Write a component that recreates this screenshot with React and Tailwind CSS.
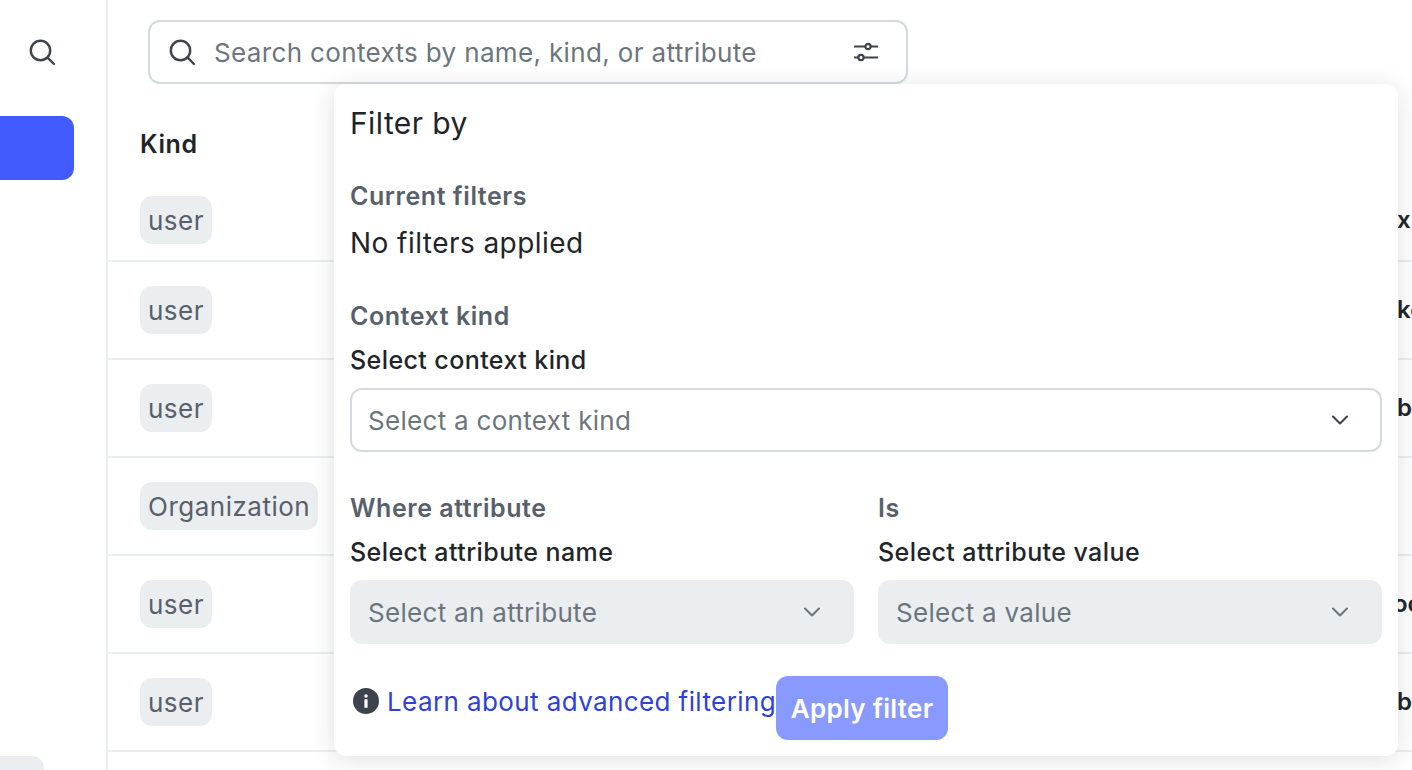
import React from "react";
import { ChevronDown } from "lucide-react";

const rows = [
  { kind: "user", tail: "x", first: true },
  { kind: "user", tail: "ke" },
  { kind: "user", tail: "be" },
  { kind: "Organization", tail: "" },
  { kind: "user", tail: "oc", shifted: true },
  { kind: "user", tail: "be" },
];

const SearchIcon = ({ className }) => (
  <svg viewBox="0 0 28 28" fill="none" stroke="currentColor" strokeWidth="2.4" className={className}>
    <circle cx="12.5" cy="12.5" r="9.7" />
    <path d="M19.6 19.6 L26 26" strokeLinecap="round" />
  </svg>
);

const SlidersIcon = () => (
  <svg viewBox="0 0 24 20" fill="none" stroke="currentColor" className="w-6 h-5 text-[#3d444d]">
    <path d="M0 4.5H11.5M16.5 4.5H24M0 15.5H4.5M9.5 15.5H24" strokeWidth="2.2" />
    <circle cx="14" cy="4.5" r="2.6" strokeWidth="2.2" />
    <circle cx="7" cy="15.5" r="2.6" strokeWidth="2.2" />
  </svg>
);

const InfoIcon = () => (
  <svg viewBox="0 0 26 26" className="w-[26px] h-[26px] shrink-0">
    <circle cx="13" cy="13" r="13" fill="#3d444d" />
    <circle cx="13" cy="8" r="1.8" fill="#fff" />
    <rect x="11.4" y="11.2" width="3.2" height="8.6" rx="0.6" fill="#fff" />
  </svg>
);

const Select = ({ label, disabled, className }) => (
  <div
    className={
      disabled
        ? "h-16 rounded-xl bg-[#ebeef1] flex items-center justify-between pl-[18px] pr-[28px] " + (className || "")
        : "h-16 rounded-xl border-2 border-[#d5dae1] bg-white flex items-center justify-between pl-4 pr-[26px] " + (className || "")
    }
  >
    <span className="text-[26px] tracking-[0.3px] text-[#6c757d]">{label}</span>
    <ChevronDown className={disabled ? "w-7 h-7 text-[#6c757d]" : "w-7 h-7 text-[#3d444d]"} strokeWidth={1.8} />
  </div>
);

const SectionLabel = ({ children }) => (
  <div className="text-[25px] leading-8 tracking-[0.55px] font-semibold text-[#58606b]">{children}</div>
);

const FieldLabel = ({ children }) => (
  <div className="text-[25px] leading-8 tracking-[0.42px] font-medium text-[#212529]">{children}</div>
);

const FilterPopover = () => (
  <div className="absolute left-[334px] top-[84px] w-[1064px] h-[672px] bg-white rounded-xl shadow-[0_4px_24px_rgba(33,37,41,0.14)] p-4 flex flex-col">
    <div className="text-[30px] leading-[46px] tracking-[0.4px] text-[#212529]">Filter by</div>

    <div className="mt-[34px]">
      <SectionLabel>Current filters</SectionLabel>
    </div>
    <div className="text-[28px] leading-[46px] tracking-[0.45px] mt-[8px] text-[#212529]">No filters applied</div>

    <div className="mt-[34px]">
      <SectionLabel>Context kind</SectionLabel>
    </div>
    <div className="mt-3">
      <FieldLabel>Select context kind</FieldLabel>
    </div>
    <Select label="Select a context kind" className="mt-3" />

    <div className="grid grid-cols-2 gap-6 mt-10">
      <div>
        <SectionLabel>Where attribute</SectionLabel>
        <div className="mt-3">
          <FieldLabel>Select attribute name</FieldLabel>
        </div>
        <Select label="Select an attribute" disabled className="mt-3" />
      </div>
      <div>
        <SectionLabel>Is</SectionLabel>
        <div className="mt-3">
          <FieldLabel>Select attribute value</FieldLabel>
        </div>
        <Select label="Select a value" disabled className="mt-3" />
      </div>
    </div>

    <div className="flex items-start mt-8">
      <div className="flex items-center gap-2 pl-[3px] h-[50px]">
        <InfoIcon />
        <span className="text-[26px] tracking-[0.4px] text-[#2f3fd9] whitespace-nowrap">Learn about advanced filtering</span>
      </div>
      <button className="w-[172px] h-16 rounded-xl bg-[#8899ff] text-white text-[26px] tracking-[0.3px] font-semibold">
        Apply filter
      </button>
    </div>
  </div>
);

export default function App() {
  return (
    <div className="relative flex h-[770px] w-[1412px] overflow-hidden bg-white font-['Inter',sans-serif]">
      <aside className="w-[108px] shrink-0 border-r-2 border-[#ebeef1] flex flex-col">
        <div className="h-[116px] flex items-start pt-[38px] pl-[28px]">
          <SearchIcon className="w-7 h-7 text-[#3d444d]" />
        </div>
        <div className="w-[74px] h-16 rounded-r-xl bg-[#425bff]" />
        <div className="mt-auto w-[44px] h-[14px] rounded-tr-xl bg-[#ebeef1]" />
      </aside>

      <main className="flex-1 min-w-0 flex flex-col">
        <div className="pt-5 pl-10">
          <div className="w-[760px] h-16 rounded-xl border-2 border-[#d5dae1] bg-white flex items-center pl-[18px] pr-[28px]">
            <SearchIcon className="w-7 h-7 text-[#3d444d] shrink-0" />
            <span className="ml-[18px] flex-1 text-[26px] tracking-[0.35px] text-[#6c757d] whitespace-nowrap">
              Search contexts by name, kind, or attribute
            </span>
            <SlidersIcon />
          </div>
        </div>

        <div className="h-[96px] flex items-center pt-[26px] pl-8 text-[25px] tracking-[0.6px] font-semibold text-[#212529]">Kind</div>

        {rows.map((row, i) => (
          <div
            key={i}
            className={
              row.first
                ? "h-[82px] shrink-0 border-b-2 border-[#ebeef1] flex items-center justify-between pl-8"
                : "h-[98px] shrink-0 border-b-2 border-[#ebeef1] flex items-center justify-between pl-8"
            }
          >
            <span className="h-12 px-2 rounded-xl bg-[#ebeef1] flex items-center text-[26px] tracking-[0.5px] text-[#58606b]">
              {row.kind}
            </span>
            <span
              className={
                row.shifted
                  ? "w-[19px] whitespace-nowrap text-[24px] font-semibold text-[#212529]"
                  : "w-[15px] whitespace-nowrap text-[24px] font-semibold text-[#212529]"
              }
            >
              {row.tail}
            </span>
          </div>
        ))}
      </main>

      <FilterPopover />
    </div>
  );
}
